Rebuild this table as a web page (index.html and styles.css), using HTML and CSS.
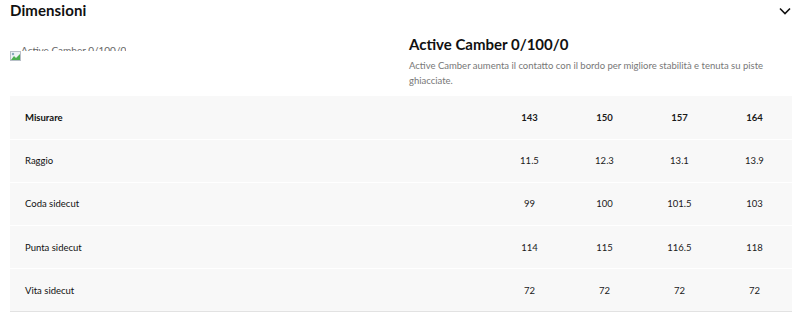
FILE: index.html
```html
<!DOCTYPE html>
<html lang="it">
<head>
<meta charset="utf-8">
<link rel="stylesheet" href="styles.css">
</head>
<body>
<div class="page">
  <div class="header">
    <h2 class="title">Dimensioni</h2>
    <svg class="chev" width="12" height="8" viewBox="0 0 12 8"><path d="M1 1.5 L6 6.5 L11 1.5" fill="none" stroke="#111" stroke-width="1.6"/></svg>
  </div>
  <div class="intro">
    <div class="imgcol">
      <div class="broken">
        <svg class="bicon" width="11" height="10" viewBox="0 0 11 10"><rect x="0.5" y="0.5" width="10" height="9" fill="#eef2f6" stroke="#b8c0c8"/><path d="M1 9 L4 5 L6 7 L10 3 L10 9 Z" fill="#4caf50"/><circle cx="3" cy="3" r="1.2" fill="#8ab"/></svg>
        <span class="alt">Active Camber 0/100/0</span>
      </div>
    </div>
    <div class="desccol">
      <h3 class="subtitle">Active Camber 0/100/0</h3>
      <p class="desc">Active Camber aumenta il contatto con il bordo per migliore stabilità e tenuta su piste ghiacciate.</p>
    </div>
  </div>
  <table class="spec">
    <tr class="head"><td class="label">Misurare</td><td>143</td><td>150</td><td>157</td><td>164</td></tr>
    <tr><td class="label">Raggio</td><td>11.5</td><td>12.3</td><td>13.1</td><td>13.9</td></tr>
    <tr><td class="label">Coda sidecut</td><td>99</td><td>100</td><td>101.5</td><td>103</td></tr>
    <tr><td class="label">Punta sidecut</td><td>114</td><td>115</td><td>116.5</td><td>118</td></tr>
    <tr class="last"><td class="label">Vita sidecut</td><td>72</td><td>72</td><td>72</td><td>72</td></tr>
  </table>
</div>
</body>
</html>
```
FILE: styles.css
```css
* { box-sizing: border-box; }
html, body { margin: 0; padding: 0; background: #fff; }
body { font-family: "Lato", "Open Sans", sans-serif; color: #111; }
.page { padding: 0 8px 0 10px; }
.header { display: flex; justify-content: space-between; align-items: center; height: 20px; }
.title { margin: 0; font-size: 15px; font-weight: 700; letter-spacing: 0.1px; }
.chev { margin-right: 1px; margin-top: 2px; }
.intro { display: flex; padding-top: 15px; height: 70px; }
.imgcol { width: 399px; }
.broken { display: flex; align-items: flex-start; height: 12px; margin-top: 10px; }
.bicon { margin-top: 6px; }
.alt { font-size: 10px; color: #666; line-height: 10px; height: 6px; overflow: hidden; display: block; }
.desccol { flex: 1; }
.subtitle { margin: 0; font-size: 15px; font-weight: 700; line-height: 18px; }
.desc { margin: 5px 0 0; font-size: 9.5px; line-height: 15px; color: #777; padding-right: 20px; }
.spec { width: 782px; border-collapse: collapse; background: #f8f8f8; margin-top: 6px; }
.spec td { height: 43.2px; font-size: 9.5px; text-align: center; width: 75px; padding: 0; border-bottom: 1px solid #fff; color: #1a1a1a; }
.spec td.label { width: auto; text-align: left; padding-left: 15px; color: #111; }
.spec tr.head td { font-weight: 700; }
.spec tr.last td { border-bottom: 1px solid #e2e2e2; }
```
